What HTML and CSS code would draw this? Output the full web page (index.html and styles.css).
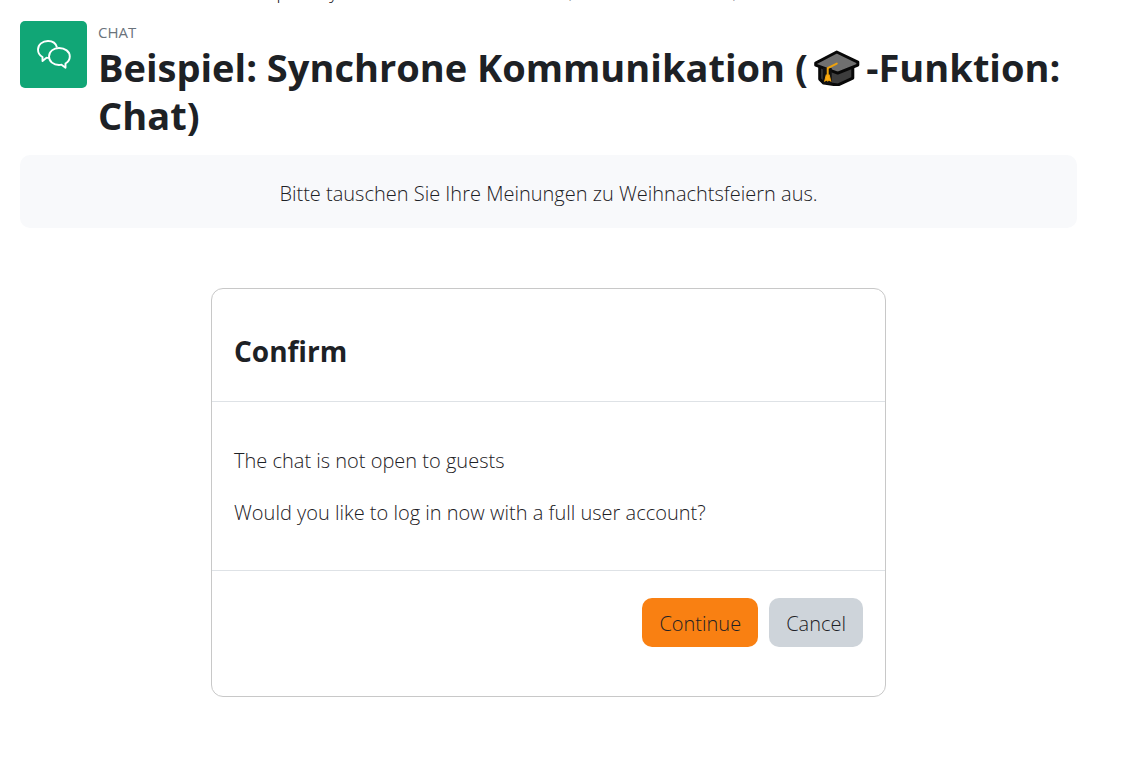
FILE: index.html
```html
<!DOCTYPE html>
<html lang="de">
<head>
<meta charset="utf-8">
<meta name="viewport" content="width=device-width, initial-scale=1">
<title>Beispiel: Synchrone Kommunikation</title>
<link rel="stylesheet" href="styles.css">
</head>
<body>
<svg class="defs" aria-hidden="true">
  <symbol id="cap" viewBox="0 0 46 36">
    <path d="M6 14v15l4 4 14 2 15-7V15z" fill="#3d3d3d" stroke="#080808" stroke-width="3" stroke-linejoin="round"/>
    <path d="M2 13 23 2l21 10v3L24 23 2 15z" fill="#707070" stroke="#080808" stroke-width="3" stroke-linejoin="round"/>
    <path d="M9 18h9v16H9z" fill="#111"/>
    <path d="M23 13.500 14 18v9" fill="none" stroke="#eea20c" stroke-width="2" stroke-linecap="round" stroke-linejoin="round"/>
    <path d="M12.500 25h3l1.500 6-2-1-1 1-1-1-2 1z" fill="#fcaa10" stroke="#eea20c"/>
  </symbol>
</svg>
<nav class="crumbs" aria-label="Breadcrumb"><span class="crumb">Beispiel: Synchrone Kommunikation (<svg class="cap"><use href="#cap"/></svg>-Funktion: Chat)</span></nav>
<main class="page">
  <header class="head">
    <div class="activity">
      <svg viewBox="0 0 34 30" width="34" height="30" fill="none" stroke="#fff" stroke-width="1.900" stroke-linejoin="round" aria-hidden="true">
        <path d="M20 7.500C19 3.500 15.500 1 11 1 5.500 1 1 4.500 1 9.500c0 3.500 1.700 6 4.500 7.500v4l4-3.200c1 .1 1.600.1 2.500-.2"/>
        <path d="M22 8C16.500 8 12 11.500 12 16.500S16.500 25 22 25c1 0 1.700 0 2.500-.3l4 3V23.500c2.500-1.500 4.300-4 4.300-7C32.800 11.500 28 8 22 8z"/>
      </svg>
    </div>
    <div class="heading">
      <div class="kind">CHAT</div>
      <h1 class="title">Beispiel: Synchrone Kommunikation (<svg class="cap" role="img" aria-label="Moodle"><use href="#cap"/></svg>-Funktion: Chat)</h1>
    </div>
  </header>
  <p class="intro">Bitte tauschen Sie Ihre Meinungen zu Weihnachtsfeiern aus.</p>
  <section class="dialog" aria-labelledby="confirm">
    <h2 class="dialog-head" id="confirm">Confirm</h2>
    <div class="dialog-body">
      <p>The chat is not open to guests</p>
      <p>Would you like to log in now with a full user account?</p>
    </div>
    <div class="dialog-foot">
      <button class="btn primary" type="button">Continue</button>
      <button class="btn" type="button">Cancel</button>
    </div>
  </section>
</main>
</body>
</html>
```
FILE: styles.css
```css
* { box-sizing: border-box; }
body {
  margin: 0;
  background: #fff;
  color: #1d2125;
  font-family: "Open Sans", "Noto Sans", sans-serif;
  font-size: 20px;
  font-weight: 300;
  line-height: 28px;
}
.defs { position: absolute; width: 0; height: 0; }
.crumbs {
  display: flex;
  align-items: flex-end;
  height: 5px;
  padding-left: 239px;
  overflow: hidden;
  white-space: nowrap;
}
.page { padding: 16px 67px 40px 20px; }
.head { display: flex; gap: 11px; }
.activity {
  display: flex;
  flex: none;
  align-items: center;
  justify-content: center;
  width: 67px;
  height: 67px;
  border-radius: 5px;
  background: #11a676;
}
.kind { font-size: 15px; line-height: 22px; font-weight: 400; color: #6a737b; }
.title { margin: 0; font-size: 38px; line-height: 48px; font-weight: 700; }
.cap { width: 1.250em; height: .950em; vertical-align: -.1em; }
.title .cap { margin: 0 6px 0 5px; }
.intro {
  margin: 16px 0 60px;
  padding: 26px 24px 22px;
  border-radius: 10px;
  background: #f8f9fb;
  text-align: center;
  line-height: 25px;
}
.dialog {
  max-width: 675px;
  margin: 0 auto;
  border: 1px solid #c8c8c8;
  border-radius: 12px;
}
.dialog-head {
  margin: 0;
  padding: 43px 22px 31px;
  border-bottom: 1px solid #dee2e6;
  font-size: 28px;
  line-height: 38px;
  font-weight: 700;
}
.dialog-body { display: grid; gap: 24px; padding: 45px 22px 43px; border-bottom: 1px solid #dee2e6; }
.dialog-body p { margin: 0; }
.dialog-foot { display: flex; justify-content: flex-end; gap: 11px; padding: 27px 22px 49px; }
.btn {
  padding: 11px 17px 9px;
  border: 0;
  border-radius: 10px;
  background: #ced4da;
  color: #1d2125;
  font: inherit;
  line-height: 29px;
}
.primary { background: #f98012; }
```
